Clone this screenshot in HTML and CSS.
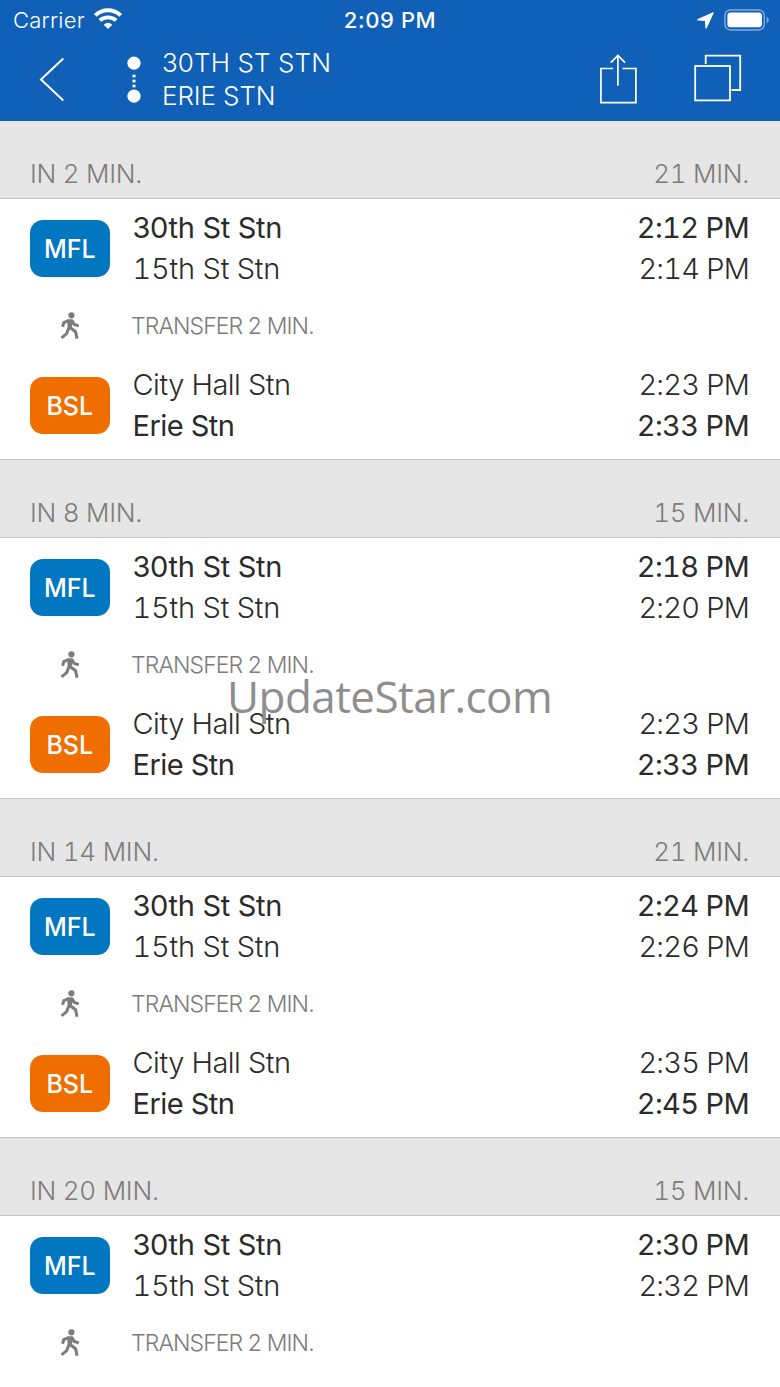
FILE: index.html
```
<!DOCTYPE html>
<html lang="en">
<head>
<meta charset="utf-8">
<title>30th St Stn to Erie Stn</title>
<link rel="stylesheet" href="styles.css">
</head>
<body>
<svg class="defs" width="0" height="0">
  <symbol id="walk" viewBox="0 0 20 28">
    <circle cx="11.4" cy="3.3" r="3.1"/>
    <path d="M8.5 8.6 L3.8 10.6 L2.6 14.9 M12.3 9 L14.2 12.4 L18.8 13.9 M8.8 16 L6.7 21.6 L1.5 25.8 M10 15.5 L15.6 19.7 L17 26.8" fill="none" stroke="currentColor" stroke-width="3"/>
    <path d="M7.3 7.2 L12.6 7.2 L14.4 10.4 L12.6 11.6 L11.5 17 L7.6 17.6 Z"/>
  </symbol>
</svg>
<header class="top">
  <div class="status">
    <div class="status-side"><span class="carrier">Carrier</span>
      <svg class="wifi" width="30" height="22" viewBox="0 0 30 22" fill="none" stroke="#fff" stroke-width="3.9"><path d="M2.3 7.3 C9.3 .5 20.7 .5 27.7 7.3"/><path d="M6.8 12.4 C11.4 8.3 18.6 8.3 23.2 12.4"/><path d="M15 21 L10.7 16.8 Q15 12.9 19.3 16.8 Z" fill="#fff" stroke="none"/></svg>
    </div>
    <div class="clock">2:09 PM</div>
    <div class="status-side end">
      <svg width="17" height="17" viewBox="0 0 17 17" fill="#fff"><path d="M16 .3 Q17 0 16.7 1 L9.8 16 Q9 17 8.3 16 L8 9 L1 8.6 Q-.4 7.8 .8 7 Z"/></svg>
      <svg width="46" height="22" viewBox="0 0 46 22"><rect x=".9" y=".9" width="39.4" height="20" rx="5.5" fill="none" stroke="#7fa9dc" stroke-width="1.5"/><rect x="3.4" y="3.6" width="34.5" height="14.6" rx="3" fill="#fff"/><path d="M42.7 7.3 Q47 11 42.7 14.7 Z" fill="#7fa9dc"/></svg>
    </div>
  </div>
  <nav class="nav">
    <svg class="back" width="26" height="44" viewBox="0 0 26 44" fill="none" stroke="#fff" stroke-width="2"><path d="M24.3 1.5 L2 22.5 L24.3 43.5"/></svg>
    <svg class="route" width="14" height="48" viewBox="0 0 14 48" fill="#fff"><circle cx="7" cy="7.2" r="6.6"/><circle cx="7" cy="40.2" r="6.6"/><rect x="5.5" y="18.7" width="3" height="2.6"/><rect x="5.5" y="23.7" width="3" height="2.6"/><rect x="5.5" y="28.7" width="3" height="2.6"/></svg>
    <div class="title"><div class="t1">30TH ST STN</div><div class="t2">ERIE STN</div></div>
    <svg class="share" width="38" height="50" viewBox="0 0 38 50" fill="none" stroke="#fff" stroke-width="1.7"><path d="M14 14.5 H1.9 V48.7 H36.9 V14.5 H23.5 M18.9 31.7 V1.5 M11.8 8.7 L18.9 1.5 L26 8.7"/></svg>
    <svg class="tabs" width="48" height="48" viewBox="0 0 48 48" fill="none" stroke="#fff" stroke-width="1.8"><rect x="1.2" y="12" width="34.8" height="34.4"/><path d="M11.7 10 V1.7 H46.2 V36 H37.5"/></svg>
  </nav>
</header>
<main>
  <section>
    <h2><span>IN 2 MIN.</span><span>21 MIN.</span></h2>
    <div class="trip">
      <div class="leg"><b class="badge mfl">MFL</b><div class="stops"><p class="main"><span class="s30">30th St Stn</span><time>2:12 PM</time></p><p><span class="s15">15th St Stn</span><time>2:14 PM</time></p></div></div>
      <div class="transfer"><svg class="walk"><use href="#walk"/></svg><span>TRANSFER 2 MIN.</span></div>
      <div class="leg"><b class="badge bsl">BSL</b><div class="stops"><p><span class="city">City Hall Stn</span><time>2:23 PM</time></p><p class="main"><span class="erie">Erie Stn</span><time>2:33 PM</time></p></div></div>
    </div>
  </section>
  <section>
    <h2><span>IN 8 MIN.</span><span>15 MIN.</span></h2>
    <div class="trip">
      <div class="leg"><b class="badge mfl">MFL</b><div class="stops"><p class="main"><span class="s30">30th St Stn</span><time>2:18 PM</time></p><p><span class="s15">15th St Stn</span><time>2:20 PM</time></p></div></div>
      <div class="transfer"><svg class="walk"><use href="#walk"/></svg><span>TRANSFER 2 MIN.</span></div>
      <div class="leg"><b class="badge bsl">BSL</b><div class="stops"><p><span class="city">City Hall Stn</span><time>2:23 PM</time></p><p class="main"><span class="erie">Erie Stn</span><time>2:33 PM</time></p></div></div>
    </div>
  </section>
  <section>
    <h2><span>IN 14 MIN.</span><span>21 MIN.</span></h2>
    <div class="trip">
      <div class="leg"><b class="badge mfl">MFL</b><div class="stops"><p class="main"><span class="s30">30th St Stn</span><time>2:24 PM</time></p><p><span class="s15">15th St Stn</span><time>2:26 PM</time></p></div></div>
      <div class="transfer"><svg class="walk"><use href="#walk"/></svg><span>TRANSFER 2 MIN.</span></div>
      <div class="leg"><b class="badge bsl">BSL</b><div class="stops"><p><span class="city">City Hall Stn</span><time>2:35 PM</time></p><p class="main"><span class="erie">Erie Stn</span><time>2:45 PM</time></p></div></div>
    </div>
  </section>
  <section class="last">
    <h2><span>IN 20 MIN.</span><span>15 MIN.</span></h2>
    <div class="trip">
      <div class="leg"><b class="badge mfl">MFL</b><div class="stops"><p class="main"><span class="s30">30th St Stn</span><time>2:30 PM</time></p><p><span class="s15">15th St Stn</span><time>2:32 PM</time></p></div></div>
      <div class="transfer"><svg class="walk"><use href="#walk"/></svg><span>TRANSFER 2 MIN.</span></div>
    </div>
  </section>
</main>
<div class="watermark">UpdateStar.com</div>
</body>
</html>
```
FILE: styles.css
```
* { box-sizing: border-box; }
body {
  margin: 0;
  width: 780px;
  height: 1387px;
  overflow: hidden;
  position: relative;
  background: #fff;
  color: #2b2b2b;
  font-family: Inter, "Liberation Sans", sans-serif;
  white-space: nowrap;
}
svg { display: block; flex: none; }
.defs { position: absolute; }
.top { height: 121px; background: #1060b7; color: #fff; }
.status { height: 40px; padding: 0 10px 0 13px; display: flex; align-items: center; }
.status-side { flex: 1 1 0; display: flex; align-items: center; gap: 8px; }
.end { justify-content: flex-end; gap: 10px; }
.carrier { font-size: 22px; font-weight: 350; letter-spacing: .25px; }
.wifi { margin-top: -3px; }
.clock { font-size: 22px; font-weight: 550; letter-spacing: .6px; margin-right: 3px; }
.nav { height: 80px; padding: 0 38px 0 39px; display: flex; align-items: center; }
.back { margin-top: -2px; }
.route { margin-left: 62px; }
.title { margin: -2px 0 0 21px; flex: 1; font-size: 26px; font-weight: 300; line-height: 33px; }
.t1 { letter-spacing: .1px; }
.t2 { letter-spacing: -.1px; }
.share { margin: -2px 57px 0 0; }
.tabs { margin-top: -4px; }
h2 {
  margin: 0;
  height: 79px;
  padding: 36px 31px 0 30px;
  display: flex;
  justify-content: space-between;
  border: solid #c6c6c8;
  border-width: 1px 0;
  background: #e6e6e6;
  color: #7c7c7c;
  font-size: 26px;
  font-weight: 300;
  font-variant-numeric: tabular-nums;
  letter-spacing: -.25px;
  line-height: 34px;
}
section:first-child h2 { height: 78px; border-top: 0; }
.trip { height: 260px; padding: 8px 31px 0 30px; }
.last .trip { height: 171px; }
.leg { display: flex; align-items: center; gap: 23px; }
.badge {
  width: 79.5px;
  height: 56.5px;
  margin-top: 1px;
  border-radius: 13px;
  color: #fff;
  font-size: 25px;
  font-weight: 550;
  line-height: 59px;
  text-align: center;
}
.mfl { background: #0077c0; }
.bsl { background: #f06e00; }
.stops { flex: 1; }
p { margin: 0; display: flex; justify-content: space-between; font-size: 29px; font-weight: 300; line-height: 41px; }
p time, .s15 { font-variant-numeric: tabular-nums; }
p time { letter-spacing: -.8px; }
.main { font-weight: 400; }
.main time { letter-spacing: -.65px; }
.s30 { letter-spacing: -.3px; }
.s15 { letter-spacing: -.2px; }
.city { letter-spacing: -.5px; }
.erie { letter-spacing: -.55px; }
.transfer { height: 75px; padding: 0 0 2px 30px; display: flex; align-items: center; color: #7c7c7c; font-size: 23px; font-weight: 300; letter-spacing: -.9px; }
.walk { width: 20px; height: 28px; margin-right: 51px; fill: currentColor; }
.watermark {
  position: absolute;
  left: 227px;
  top: 666px;
  color: #8e8e8e;
  font: 44px/60px "Open Sans", "Noto Sans", sans-serif;
  letter-spacing: -.55px;
}
```
